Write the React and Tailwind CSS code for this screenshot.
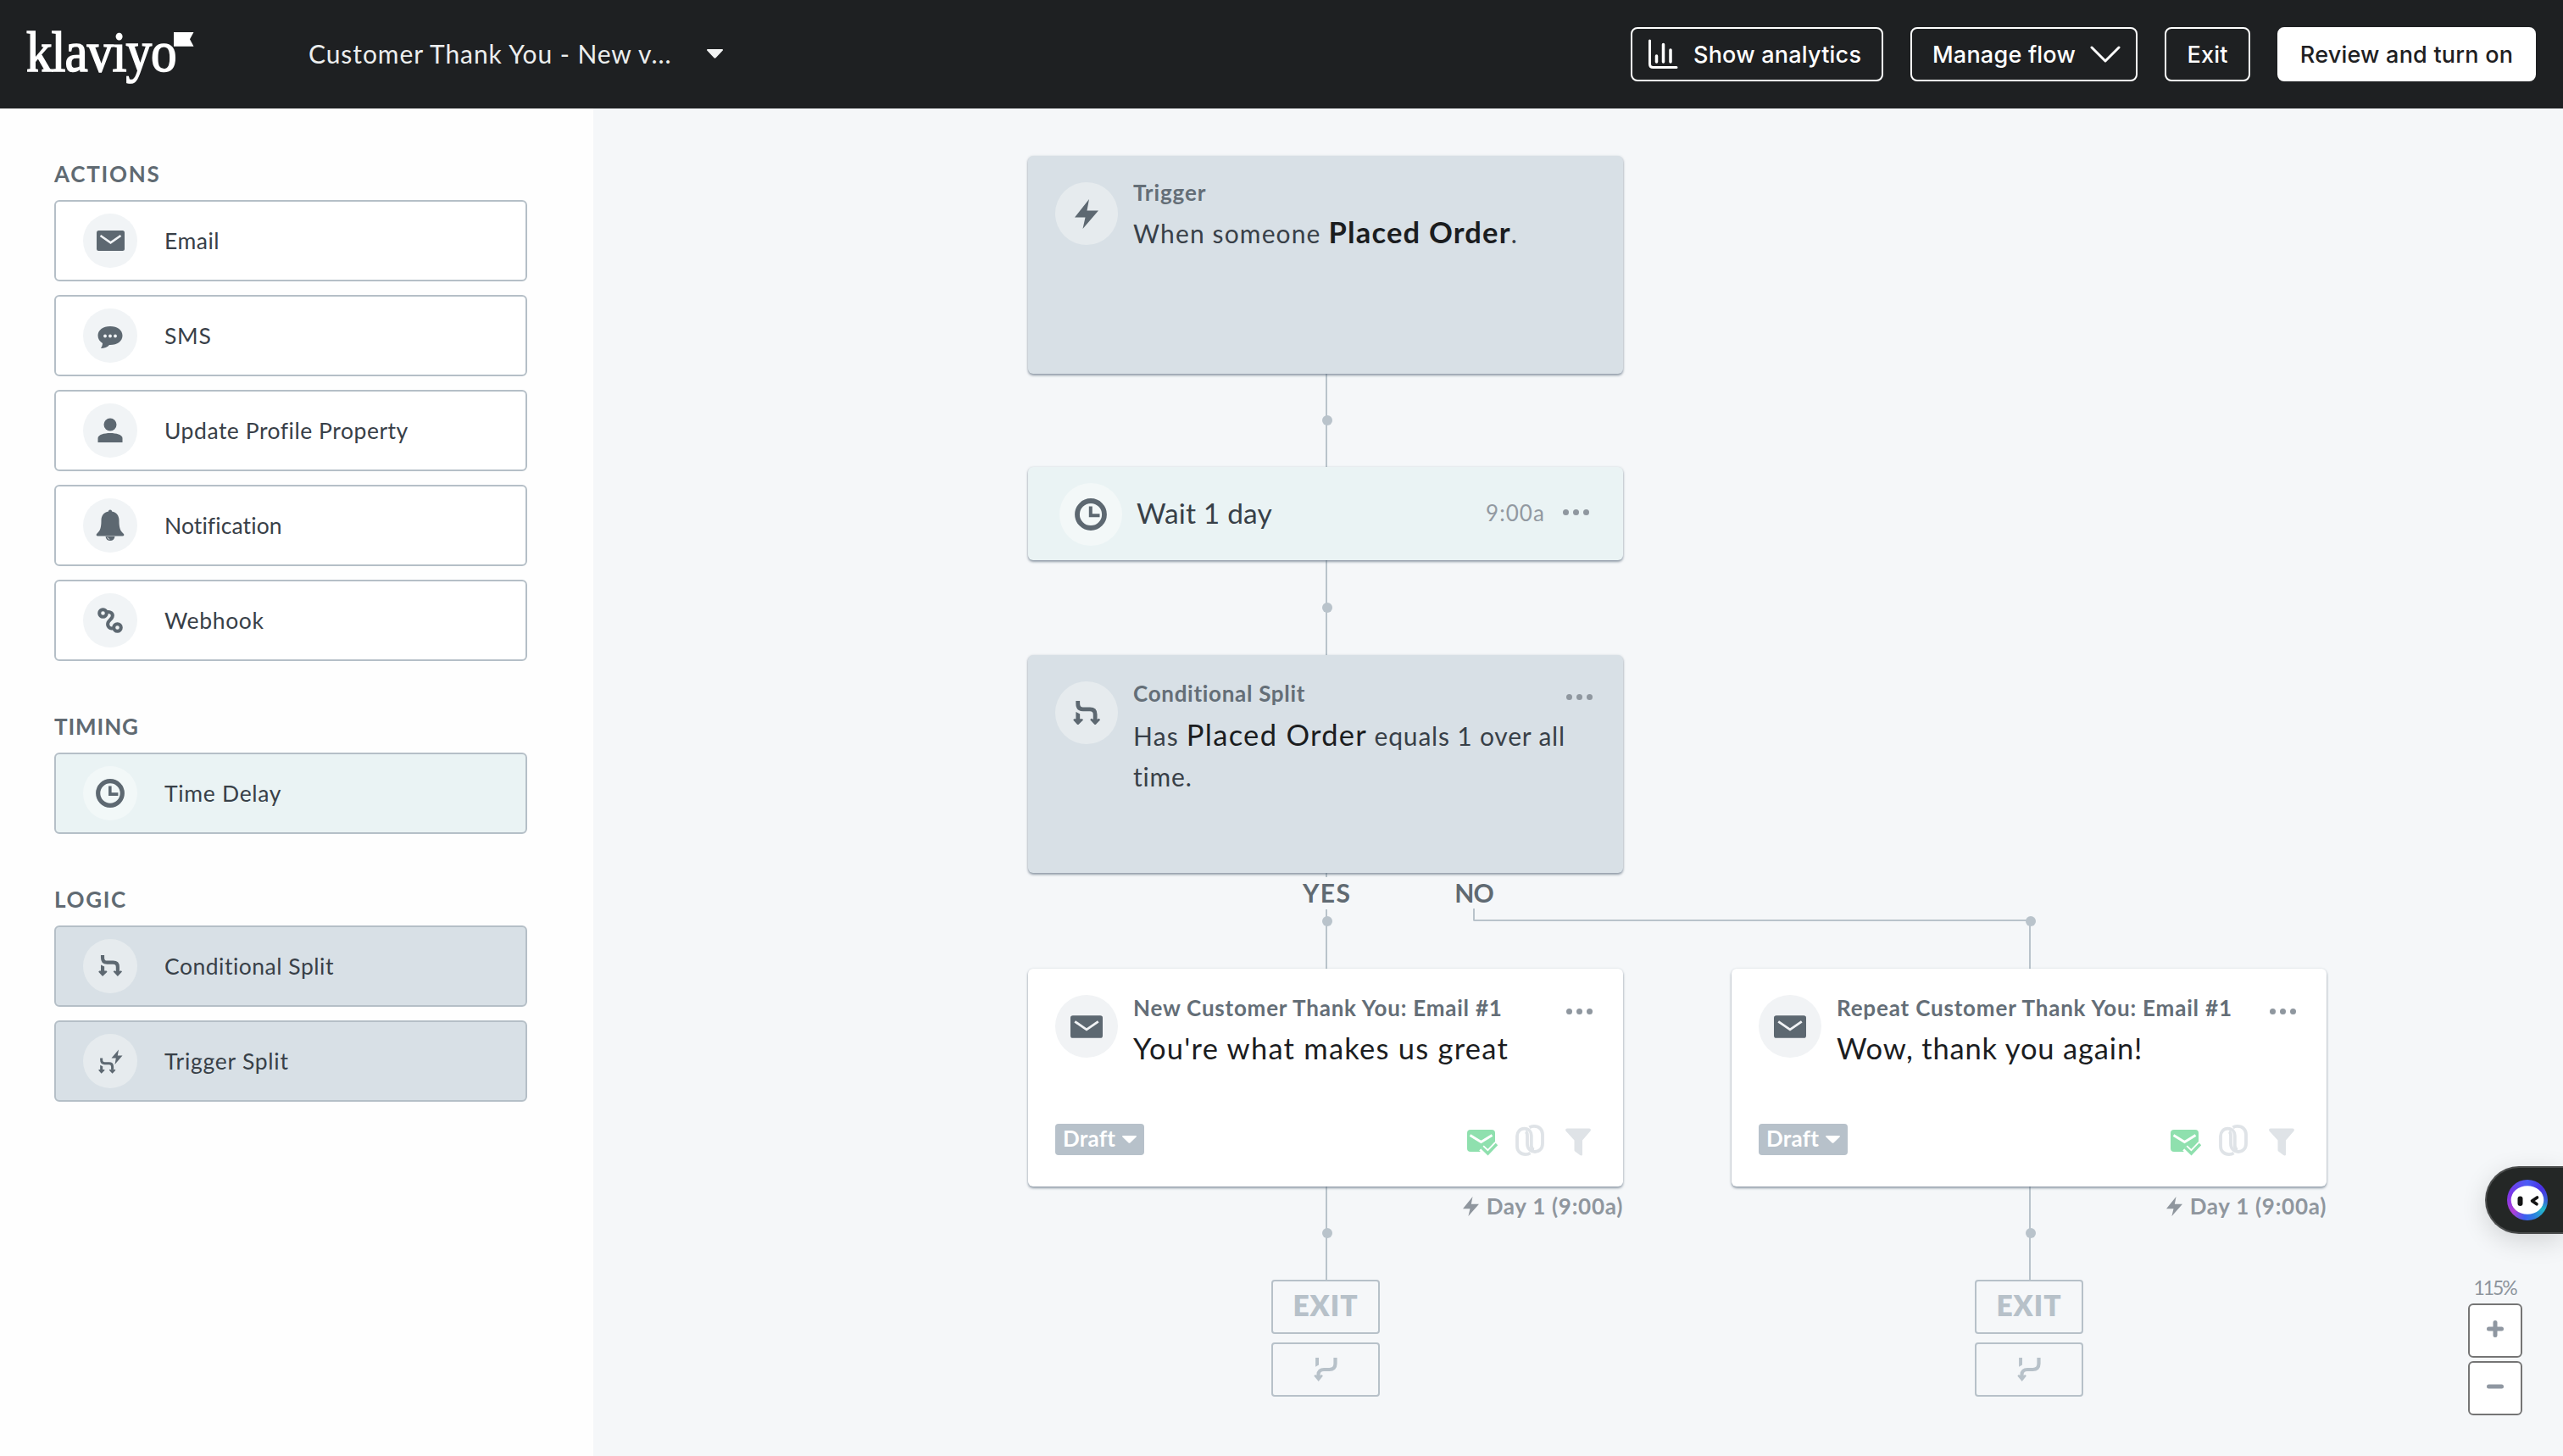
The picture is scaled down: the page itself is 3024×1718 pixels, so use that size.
import React from "react";

/* ---------- icons ---------- */

const Mail = ({ bg }) => (
  <svg width="38" height="27" viewBox="0 0 40 28" className="block">
    <rect x="0" y="0" width="40" height="28" rx="3" fill="currentColor" />
    <path d="M5.500 7.500 20 17.500 34.500 7.500" fill="none" stroke={bg} strokeWidth="3" />
  </svg>
);
const SmallMail = () => (
  <svg width="33" height="24" viewBox="0 0 33 24" className="block">
    <rect width="33" height="24" rx="2.500" fill="currentColor" />
    <path d="M4.500 6 16.500 14.300 28.500 6" fill="none" stroke="#f1f4f6" strokeWidth="2.600" />
  </svg>
);
const Sms = () => (
  <svg width="30" height="26" viewBox="0 0 30 26" className="mt-1 block">
    <path d="M15 0C6.500 0 .5 4.600.5 11c0 3.800 2.200 7 5.500 9C6 22.500 4.800 24.500 4 26c4 0 8-1.500 10-4h1c8.500 0 14.500-4.600 14.500-11S23.500 0 15 0z" fill="currentColor" />
    <circle cx="9" cy="11.500" r="1.900" fill="#f1f4f6" />
    <circle cx="15" cy="11.500" r="1.900" fill="#f1f4f6" />
    <circle cx="21" cy="11.500" r="1.900" fill="#f1f4f6" />
  </svg>
);
const Person = () => (
  <svg width="30" height="30" viewBox="0 0 30 30" className="block">
    <circle cx="15" cy="8" r="7.500" fill="currentColor" />
    <path d="M.5 29V24C.5 20 8 18 15 18s14.500 2 14.500 6v5z" fill="currentColor" />
  </svg>
);
const Bell = () => (
  <svg width="34" height="38" viewBox="0 0 34 38" className="block">
    <path d="M17 .5c1.300 0 2 .9 2 2 5.500 1 8.500 5 8.500 10.500 0 9 1.500 12.500 5 15.500 1.500 1.300 1 3-1 3H2.500c-2 0-2.500-1.700-1-3 3.500-3 5-6.500 5-15.500C6.500 7.500 9.500 3.500 15 2.500c0-1.100.7-2 2-2z" fill="currentColor" />
    <path d="M11.500 32h11c-.3 3-2.500 5-5.500 5s-5.200-2-5.500-5z" fill="currentColor" />
    <path d="M13.800 33c.3 1.200 1.200 2 2.400 2.300" stroke="#f1f4f6" strokeWidth="1" fill="none" />
  </svg>
);
const Webhook = () => (
  <svg width="30" height="30" viewBox="0 0 30 30" className="block" fill="none" stroke="currentColor" strokeWidth="4">
    <circle cx="6.500" cy="6.500" r="4.300" />
    <circle cx="23.500" cy="23.500" r="4.300" />
    <path d="M10.500 5.500c4.500-1.500 8.500 1.500 7 5.500-1 2.600-4 4-5 6.500-1.500 4.500 2 8.500 6.800 6.500" />
  </svg>
);
const Clock = ({ size }) => (
  <svg width={size} height={size} viewBox="0 0 38 38" className="block" fill="none" stroke="currentColor">
    <circle cx="19" cy="19" r="16" strokeWidth="5.800" />
    <path d="M18.800 11.500v8.800h8.700" strokeWidth="4" strokeLinecap="square" />
  </svg>
);
const SplitPath = () => (
  <g>
    <path d="M5.200 0v3c0 4 2 6 5.500 6h7.500c3.500 0 5.500 2 5.500 5.500V20" fill="none" stroke="currentColor" strokeWidth="4.300" />
    <path d="M3.100 11.800l4.300 2.200v5.200h2.600l.9 1.300L5.200 26 .2 20.500l1-1.300h1.900z" fill="currentColor" />
    <path d="M18.300 20.200l1.300-1.400 1.800 1h4.600l1.800-1 1.300 1.400-5.400 5.800z" fill="currentColor" />
  </g>
);
const Split = ({ w }) => (
  <svg width={w} height={(w * 26) / 29} viewBox="0 0 29 26" className="block">
    <SplitPath />
  </svg>
);
const TriggerSplit = () => (
  <svg width="29" height="29" viewBox="0 0 29 29" className="block">
    <g transform="translate(0 10.500) scale(.7)">
      <SplitPath />
    </g>
    <path d="M24 .5 15.500 10.500h5.300L19.500 18 28.500 7.500h-5.700z" fill="currentColor" />
  </svg>
);
const Bolt = ({ w, h }) => (
  <svg width={w} height={h} viewBox="0 0 28 35" preserveAspectRatio="none" className="block">
    <path d="M17 0 0 21.500h12.500L9.500 35 28 13.500H14.500z" fill="currentColor" />
  </svg>
);
const Merge = () => (
  <svg width="28" height="28" viewBox="0 0 28 28" className="block">
    <path d="M6 0v8.500l-3.900 2.300V0z" fill="currentColor" />
    <path d="M25.500 0v7c0 4.500-2.500 7-7 7h-6.500c-4 0-6.500 2-6.500 6v2" fill="none" stroke="currentColor" strokeWidth="4.200" />
    <path d="M.3 21.500l1.500-1.600 2 1.100h3.600l2-1.100 1.500 1.600L5.700 28z" fill="currentColor" />
  </svg>
);
const SmartSend = () => (
  <svg width="36" height="31" viewBox="0 0 36 31" className="block">
    <rect width="33" height="26" rx="4" fill="#8fe0ae" />
    <path d="M3.500 6.500 16.500 14.500 29.500 6.500" fill="none" stroke="#fff" strokeWidth="3" />
    <path d="M17 21.500l7.500 7L35.500 17" fill="none" stroke="#fff" strokeWidth="8" />
    <path d="M17.300 21l7.200 7L35 17" fill="none" stroke="#8fe0ae" strokeWidth="3.600" />
  </svg>
);
const Links = () => (
  <svg width="34" height="37" viewBox="0 0 34 37" className="block" fill="none" stroke="#dfe3e7" strokeWidth="3.800">
    <path d="M17.500 33.500c-1.600 1.200-3.400 1.600-5.500 1.600-6 0-10-4-10-9.600V13.500C2 8.500 5.500 4.600 10.500 4.600s8.300 3.600 8.300 8.300v11.500c0 2.600 1 4.600 3.200 5" />
    <path d="M16.500 3.400C18 2.300 20 1.900 22 1.900c6 0 10 4 10 9.600v11c0 5.500-3.800 9.500-9 9.500s-9-4-9-9.500V13c0-2.500-.6-4-2-4.700" />
  </svg>
);
const Funnel = () => (
  <svg width="30" height="33" viewBox="0 0 30 33" className="block">
    <path d="M2 .5h26c1.800 0 2.500 2 1.300 3.300L20 14.500V31c0 1.500-1.500 2-2.800 1.100l-5.700-4.300c-.8-.6-1-1.200-1-2V14.500L.7 3.800C-.5 2.500.2.5 2 .5z" fill="#dfe3e7" />
  </svg>
);
const Caret = ({ w, h }) => (
  <svg width={w} height={h} viewBox="0 0 18 10" preserveAspectRatio="none" className="block">
    <path d="M1 0h16c.9 0 1.300.9.6 1.600L10 9.400c-.6.6-1.400.6-2 0L.4 1.600C-.3.900.1 0 1 0z" fill="currentColor" />
  </svg>
);
const Dots = () => (
  <div className="flex h-2 gap-[5px] text-[#8f979f]">
    <span className="size-[7px] rounded-full bg-current" />
    <span className="size-[7px] rounded-full bg-current" />
    <span className="size-[7px] rounded-full bg-current" />
  </div>
);

/* ---------- header ---------- */

const headerButton =
  "flex h-16 items-center rounded-lg border-[2.500px] border-white font-['Inter',sans-serif] text-[27px] font-medium leading-none tracking-[0.220px] whitespace-nowrap";

function Header() {
  return (
    <header className="flex h-32 shrink-0 items-center bg-[#1e2022] pr-8 pl-[31px] text-white">
      <div className="relative h-16 w-[197px]">
        <div className="origin-left scale-x-[0.9] font-['Liberation_Serif',serif] text-[68px] leading-[59px] tracking-[-1.100px] [-webkit-text-stroke:1.600px_white]">
          klaviyo
        </div>
        <svg width="24" height="17" viewBox="0 0 24 17" className="absolute top-[6px] left-[174px]">
          <path d="M0 0h23.500L19 8.300l4.500 8.500H0z" fill="currentColor" />
        </svg>
      </div>
      <div className="ml-[136px] w-[470px] pb-[2px] text-[30px] tracking-[0.920px] whitespace-nowrap text-[#eceeee]">
        Customer Thank You - New v...
      </div>
      <div className="pb-0.5 text-[#f2f3f3]">
        <Caret w={19} h={11} />
      </div>
      <div className="ml-auto flex gap-8">
        <button className={headerButton + " w-[298px] pl-[18px]"}>
          <svg width="36" height="36" viewBox="0 0 36 36" fill="none" stroke="currentColor" strokeWidth="3" strokeLinecap="round">
            <path d="M2.500 2v27.500c0 2.500 1.200 4 4 4H34" />
            <path d="M10.500 20v7M18.500 6.500V27M27 13v14" strokeWidth="3.500" />
          </svg>
          <span className="ml-[18px]">Show analytics</span>
        </button>
        <button className={headerButton + " w-[268px] pl-[24px]"}>
          <span>Manage flow</span>
          <svg width="36" height="20" viewBox="0 0 36 20" className="ml-[17px]" fill="none" stroke="currentColor" strokeWidth="3" strokeLinecap="round" strokeLinejoin="round">
            <path d="M2 2l16 16L34 2" />
          </svg>
        </button>
        <button className={headerButton + " w-[101px] justify-center"}>Exit</button>
        <button className={headerButton + " w-[305px] justify-center bg-white text-[#1e2022]"}>
          Review and turn on
        </button>
      </div>
    </header>
  );
}

/* ---------- sidebar ---------- */

function Section({ title, tracking, children }) {
  return (
    <section>
      <div className="flex h-[108px] items-end pb-[15px]">
        <h2 className={"text-[26px] leading-8 font-bold text-[#606a72] " + tracking}>{title}</h2>
      </div>
      <div className="flex flex-col gap-4">{children}</div>
    </section>
  );
}

function Item({ icon, label, tracking, bg = "bg-white", circle = "bg-[#f1f4f6]" }) {
  return (
    <div className={"flex h-24 w-[558px] items-center gap-[32px] rounded-md border-2 border-[#b5bfc7] pl-8 " + bg}>
      <div className={"flex size-16 items-center justify-center rounded-full text-[#5d6871] " + circle}>{icon}</div>
      <span className={"text-[26.500px] leading-8 whitespace-nowrap text-[#384048] " + tracking}>{label}</span>
    </div>
  );
}

function Sidebar() {
  return (
    <aside className="w-[700px] shrink-0 bg-[#fefefe] pl-16">
      <Section title="ACTIONS" tracking="tracking-[1.750px]">
        <Item icon={<SmallMail />} label="Email" tracking="tracking-[0.500px]" />
        <Item icon={<Sms />} label="SMS" tracking="tracking-[0.700px]" />
        <Item icon={<Person />} label="Update Profile Property" tracking="tracking-[0.530px]" />
        <Item icon={<Bell />} label="Notification" tracking="tracking-[0.100px]" />
        <Item icon={<Webhook />} label="Webhook" tracking="tracking-[0.650px]" />
      </Section>
      <Section title="TIMING" tracking="tracking-[0.900px]">
        <Item icon={<Clock size={34} />} label="Time Delay" tracking="tracking-[0.700px]" bg="bg-[#eaf3f4]" circle="bg-white/40" />
      </Section>
      <Section title="LOGIC" tracking="tracking-[1.650px]">
        <Item icon={<Split w={28} />} label="Conditional Split" tracking="tracking-[0.500px]" bg="bg-[#d8e0e6]" circle="bg-[#e6ebee]" />
        <Item icon={<TriggerSplit />} label="Trigger Split" tracking="tracking-[0.750px]" bg="bg-[#d8e0e6]" circle="bg-[#e6ebee]" />
      </Section>
    </aside>
  );
}

/* ---------- flow canvas ---------- */

const cardShadow = "rounded-md shadow-[0_2px_3px_rgba(82,98,116,0.6),0_0_3px_rgba(92,108,124,0.15)]";

function Connector({ className, dot, children }) {
  return (
    <div className={"relative flex w-full justify-center " + className}>
      <div className="ml-[2px] h-full w-[2px] bg-[#b9c3cb]" />
      <span className={"absolute left-[347px] size-3 rounded-full bg-[#b9c3cb] " + dot} />
      {children}
    </div>
  );
}

function EmailNode({ title, titleTracking, subject, subjectTracking }) {
  return (
    <div className={"relative z-10 flex h-[257px] w-full flex-col bg-white " + cardShadow}>
      <div className="flex grow pl-8">
        <div className="mt-[31px] flex size-[74px] shrink-0 items-center justify-center rounded-full bg-[#f1f3f5] text-[#5d6871]">
          <Mail bg="#f1f3f5" />
        </div>
        <div className="ml-[18px] pt-[30px] whitespace-nowrap">
          <div className={"text-[26px] leading-8 font-bold text-[#646e77] " + titleTracking}>{title}</div>
          <div className={"mt-2 text-[34.500px] leading-[48px] text-[#1b1d1f] " + subjectTracking}>{subject}</div>
        </div>
        <div className="mt-[47px] mr-9 ml-auto">
          <Dots />
        </div>
      </div>
      <div className="mb-[36px] flex items-end pr-[38px] pl-8">
        <div className="mb-px flex h-[37px] w-[105px] items-center gap-[8px] rounded bg-[#b7c1ca] pl-[9px] text-white">
          <span className="pb-[3px] text-[26px] leading-8 font-bold tracking-[0.200px]">Draft</span>
          <Caret w={17} h={9} />
        </div>
        <div className="ml-auto flex items-end">
          <SmartSend />
          <div className="ml-[21px]">
            <Links />
          </div>
          <div className="ml-[25px]">
            <Funnel />
          </div>
        </div>
      </div>
    </div>
  );
}

function ExitBlock() {
  return (
    <>
      <Connector className="h-[110px]" dot="top-[49px]">
        <div className="absolute top-[7px] right-0 flex items-center gap-[9px] text-[#8f969e]">
          <Bolt w={19} h={23} />
          <span className="text-[26px] leading-8 font-bold tracking-[0.720px] whitespace-nowrap">Day 1 (9:00a)</span>
        </div>
      </Connector>
      <div className="flex flex-col items-center gap-[10px] text-[#b7c1c9]">
        <div className="flex h-16 w-32 items-center justify-center rounded border-[2.500px] border-[#b7c1c9] pb-0.5 text-[33.500px] leading-none font-extrabold tracking-[1px]">
          EXIT
        </div>
        <div className="flex h-16 w-32 items-center justify-center rounded border-[2.500px] border-[#b7c1c9]">
          <Merge />
        </div>
      </div>
    </>
  );
}

function Flow() {
  return (
    <div className="flex items-start gap-32 pt-[56px] pl-[513px]">
      <div className="w-[702px]">
        <div className={"relative z-10 flex h-[257px] bg-[#d8e0e6] pl-8 " + cardShadow}>
          <div className="mt-[31px] flex size-[74px] items-center justify-center rounded-full bg-[#e6ebee] text-[#5d6871]">
            <Bolt w={28} h={35} />
          </div>
          <div className="ml-[18px] pt-[27px] whitespace-nowrap">
            <div className="text-[26px] leading-8 font-bold tracking-[0.900px] text-[#646e77]">Trigger</div>
            <div className="mt-2 text-[30px] leading-[48px] text-[#384048]">
              <span className="tracking-[1.130px]">When someone </span>
              <span className="text-[34.500px] leading-none font-bold tracking-[1.200px] text-[#1b1d1f]">Placed Order</span>.
            </div>
          </div>
        </div>

        <Connector className="h-[110px]" dot="top-[49px]" />

        <div className={"relative z-10 flex h-[110px] items-center bg-[#eaf3f4] pt-[2px] pl-[37px] " + cardShadow}>
          <div className="flex size-[74px] items-center justify-center rounded-full bg-[#f3f8f8] text-[#5d6871]">
            <Clock size={38} />
          </div>
          <span className="ml-[17px] pb-[4px] text-[33.500px] leading-10 tracking-[0.150px] text-[#384048]">Wait 1 day</span>
          <span className="ml-auto pb-[5px] text-[26px] leading-8 tracking-[1.070px] text-[#9299a1]">9:00a</span>
          <div className="mr-[40px] mb-[5px] ml-[21px]">
            <Dots />
          </div>
        </div>

        <Connector className="h-[112px]" dot="top-[50px]" />

        <div className={"relative z-10 flex h-[257px] bg-[#d8e0e6] pl-8 " + cardShadow}>
          <div className="mt-[31px] flex size-[74px] shrink-0 items-center justify-center rounded-full bg-[#e6ebee] text-[#5d6871]">
            <Split w={32} />
          </div>
          <div className="ml-[18px] pt-[29px] whitespace-nowrap">
            <div className="text-[26px] leading-8 font-bold tracking-[0.700px] text-[#646e77]">Conditional Split</div>
            <div className="mt-[10px] text-[30px] leading-[48px] tracking-[0.800px] text-[#384048]">
              <span className="tracking-[1.200px]">Has </span>
              <span className="text-[34.500px] leading-none tracking-[1.300px] text-[#1b1d1f]">Placed Order</span> equals 1 over all
              <br />
              time.
            </div>
          </div>
          <div className="mt-[46px] mr-9 ml-auto">
            <Dots />
          </div>
        </div>

        <Connector className="h-[113px]" dot="top-[51px]">
          <div className="absolute top-[5px] left-[324px] flex gap-[122px] text-[30px] leading-[36px] font-bold text-[#606a72]">
            <span className="bg-[#f5f7f9] pb-[2px] tracking-[1.400px]">YES</span>
            <span className="tracking-[-0.900px]">NO</span>
          </div>
          <div className="absolute top-[42px] left-[525px] h-[15px] w-[658px] rounded-bl-xs border-b-[2.500px] border-l-2 border-[#b9c3cb]" />
        </Connector>

        <EmailNode title="New Customer Thank You: Email #1" titleTracking="tracking-[0.780px]" subject="You're what makes us great" subjectTracking="tracking-[1.250px]" />
        <ExitBlock />
      </div>

      <div className="w-[702px] pt-[902px]">
        <Connector className="h-[57px]" dot="-top-[5px]" />
        <EmailNode title="Repeat Customer Thank You: Email #1" titleTracking="tracking-[0.820px]" subject="Wow, thank you again!" subjectTracking="tracking-[0.840px]" />
        <ExitBlock />
      </div>
    </div>
  );
}

/* ---------- floating controls ---------- */

function Assistant() {
  return (
    <div className="absolute top-[1248px] right-0 flex h-20 w-[92px] items-center rounded-l-full border-2 border-r-0 border-[#4b4d4d] bg-[#242726] pl-6 shadow-[0_8px_30px_rgba(0,0,0,0.14)]">
      <div className="flex size-12 items-center justify-center rounded-full bg-[conic-gradient(from_0deg,#4a5cf5,#4b2fe6_50deg,#3b62d8_90deg,#22b8c8_120deg,#2f7be0_160deg,#3b5df0_190deg,#b03fd6_230deg,#7a35e8_290deg,#4a5cf5)]">
        <svg width="40" height="34" viewBox="0 0 40 34">
          <ellipse cx="20" cy="17" rx="19.300" ry="16.800" fill="#fff" />
          <rect x="8.500" y="12.500" width="6" height="11.500" rx="3" fill="#141414" />
          <path d="M31.500 14l-6 4 5.500 3.800" fill="none" stroke="#141414" strokeWidth="3.600" strokeLinecap="round" strokeLinejoin="round" />
        </svg>
      </div>
    </div>
  );
}

function Zoom() {
  return (
    <div className="absolute top-[1376px] right-12 flex w-16 flex-col items-center">
      <span className="h-[34px] pr-px text-[23px] leading-[30px] tracking-[-2.100px] text-[#8e959d]">115%</span>
      <div className="flex flex-col gap-1 text-[#8f97a1]">
        <button className="flex size-16 items-center justify-center rounded-md border-2 border-[#757575] bg-white">
          <svg width="20" height="20" viewBox="0 0 20 20" className="mb-1">
            <path d="M2.500 10h15M10 2.500v15" stroke="currentColor" strokeWidth="5" strokeLinecap="round" />
          </svg>
        </button>
        <button className="flex size-16 items-center justify-center rounded-md border-2 border-[#757575] bg-white">
          <svg width="20" height="20" viewBox="0 0 20 20" className="mb-1">
            <path d="M2.500 10h15" stroke="currentColor" strokeWidth="5" strokeLinecap="round" />
          </svg>
        </button>
      </div>
    </div>
  );
}

export default function App() {
  return (
    <div className="flex h-[1718px] w-[3024px] flex-col overflow-hidden font-['Lato',sans-serif]">
      <Header />
      <div className="flex min-h-0 grow">
        <Sidebar />
        <main className="relative grow bg-[#f5f7f9]">
          <Flow />
          <Assistant />
          <Zoom />
        </main>
      </div>
    </div>
  );
}
